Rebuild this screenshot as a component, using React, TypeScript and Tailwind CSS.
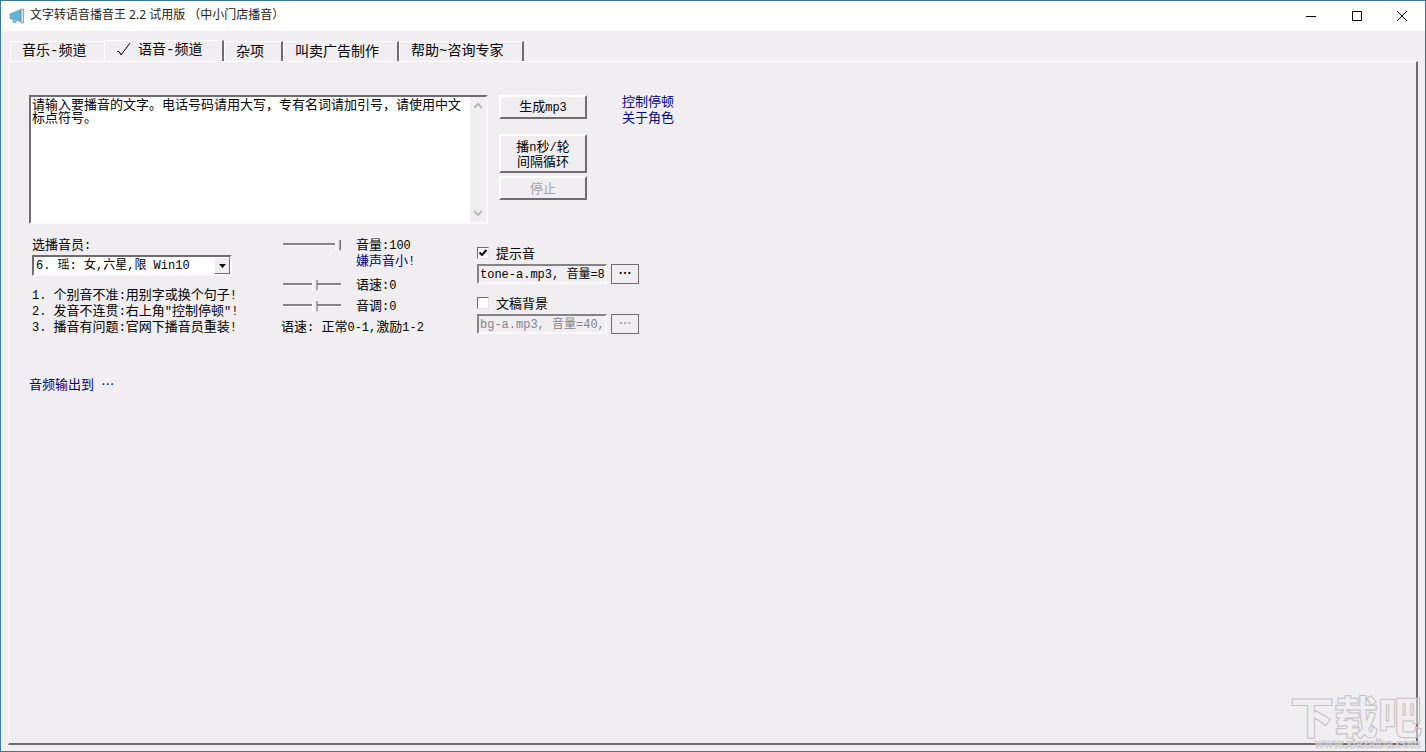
import React, { useState } from 'react';

const CJK = "font-['Noto_Sans_CJK_SC',sans-serif]";
const MONO = "font-['Liberation_Mono','Noto_Sans_CJK_SC',monospace]";

// Latin runs are set in the fixed-width face, everything else in the CJK one
const Mixed: React.FC<{ text: string }> = ({ text }) => (
  <>
    {text.split(/([\x20-\x7e]+)/).map((part, i) =>
      i % 2 === 1 ? (
        <span key={i} className={`${MONO} text-xs leading-none`}>{part}</span>
      ) : (
        part
      )
    )}
  </>
);

const TabText: React.FC<{ text: string }> = ({ text }) => (
  <>
    {text.split(/([-~])/).map((part, i) => (i % 2 === 1 ? <span key={i} className={MONO}>{part}</span> : part))}
  </>
);

interface TabProps {
  label: string;
  active: boolean;
  width: string;
  first?: boolean;
  onSelect: () => void;
}

const Tab: React.FC<TabProps> = ({ label, active, width, first, onSelect }) => (
  <button
    role="tab"
    aria-selected={active}
    onClick={onSelect}
    className={`flex items-center border-t border-l border-t-white border-l-white text-sm leading-none ${width} ${
      active ? 'h-[22px] -mb-px bg-[#f0eef1] pb-[5px] pl-3' : 'h-5 pb-[3px] pl-[11px]'
    } ${first ? '' : 'border-r-2 border-r-[#6f6c6f]'}`}
  >
    {active && (
      <svg width="14" height="14" viewBox="0 0 14 14" className="mr-[7px]" fill="none" stroke="black">
        <path d="M0 9.500h2l2 3.500L13 1" />
      </svg>
    )}
    <span className="whitespace-pre"><TabText text={label} /></span>
  </button>
);

interface PushButtonProps {
  children: React.ReactNode;
  className: string;
  disabled?: boolean;
}

const PushButton: React.FC<PushButtonProps> = ({ children, className, disabled }) => (
  <button
    disabled={disabled}
    className={`w-[88px] border-2 border-t-white border-l-white border-r-[#6f6c6f] border-b-[#6f6c6f] bg-[#f0eef1] pb-[2px] text-[13px] leading-[13px] disabled:text-[#a5a3a6] ${className}`}
  >
    {children}
  </button>
);

const Slider: React.FC<{ id: string; initial: number }> = ({ id, initial }) => {
  const [value, setValue] = useState(initial);
  return (
    <input
      id={id}
      type="range"
      min={0}
      max={100}
      value={value}
      onChange={(e) => setValue(Number(e.target.value))}
      className="block h-4 w-[58px] appearance-none bg-transparent [&::-webkit-slider-runnable-track]:h-[3px] [&::-webkit-slider-runnable-track]:border-t-2 [&::-webkit-slider-runnable-track]:border-b [&::-webkit-slider-runnable-track]:border-t-[#868386] [&::-webkit-slider-runnable-track]:border-b-white [&::-webkit-slider-thumb]:-mt-[5px] [&::-webkit-slider-thumb]:h-[13px] [&::-webkit-slider-thumb]:w-[6px] [&::-webkit-slider-thumb]:appearance-none [&::-webkit-slider-thumb]:bg-[linear-gradient(to_right,#fff_1px,#eeecef_2px,#eeecef_4px,#6f6c6f_5px)] [&::-webkit-slider-thumb]:[clip-path:polygon(0_0,100%_0,100%_75%,50%_100%,0_75%)]"
    />
  );
};

interface SoundFileProps {
  id: string;
  label: string;
  value: string;
  defaultChecked: boolean;
}

const SoundFile: React.FC<SoundFileProps> = ({ id, label, value, defaultChecked }) => {
  const [on, setOn] = useState(defaultChecked);
  return (
    <div>
      <label htmlFor={id} className="flex h-4 items-center gap-[7px]">
        <span className="relative flex">
          <input
            id={id}
            type="checkbox"
            checked={on}
            onChange={() => setOn(!on)}
            className="h-3 w-3 appearance-none border border-t-[#6f6c6f] border-l-[#6f6c6f] border-r-[#e3e1e4] border-b-[#e3e1e4] bg-white"
          />
          {on && (
            <svg width="12" height="12" viewBox="0 0 12 12" className="pointer-events-none absolute inset-0" fill="none" stroke="black" strokeWidth="2">
              <path d="M2.5 5.5 5 8l4.500-5" />
            </svg>
          )}
        </span>
        {label}
      </label>
      <div className="mt-[3px] flex gap-1">
        <input
          type="text"
          readOnly
          aria-label={`${label}文件`}
          value={value}
          disabled={!on}
          className={`${MONO} h-5 w-[130px] border-2 border-t-[#868386] border-l-[#868386] border-r-[#f8f7f9] border-b-[#f8f7f9] bg-[#f0eef1] pb-[2px] pl-px text-xs leading-4 disabled:text-[#868386]`}
        />
        <button
          disabled={!on}
          aria-label={`选择${label}`}
          className="flex h-5 w-7 items-center justify-center border border-[#6f6c6f] pb-1 text-[13px] font-bold leading-none disabled:text-[#a5a3a6]"
        >
          …
        </button>
      </div>
    </div>
  );
};

const TABS = [
  { label: '音乐-频道', width: 'w-[94px]' },
  { label: '语音-频道', width: 'w-[120px]' },
  { label: '杂项', width: 'w-[59px]' },
  { label: '叫卖广告制作', width: 'w-[116px]' },
  { label: '帮助~咨询专家', width: 'w-[125px]' },
];

const TitleBar: React.FC = () => (
  <header className="flex h-[30px] items-center bg-white pl-2">
    <svg width="16" height="16" viewBox="0 0 16 16" className="mr-[5px]">
      <path d="M1 6 12 1.500v12L1 10.500z" fill="#5fb4dd" stroke="#6f93a8" strokeWidth=".8" />
      <path d="M12 1h2.500v14H12z" fill="#dde2e5" stroke="#7b868c" strokeWidth=".7" />
      <path d="M4 11v3l3 .8v-3" fill="#8ccae6" stroke="#6f93a8" strokeWidth=".8" />
    </svg>
    <h1 className="grow pb-[2px] font-['Noto_Sans','Noto_Sans_CJK_SC',sans-serif] text-xs leading-4 text-[#222]">
      文字转语音播音王 2.2 试用版 （中小门店播音）
    </h1>
    <button aria-label="最小化" className="flex h-full w-[46px] items-center justify-center">
      <svg width="10" height="10" viewBox="0 0 10 10" stroke="black"><path d="M0 5.500h10" /></svg>
    </button>
    <button aria-label="最大化" className="flex h-full w-[45px] items-center justify-center">
      <svg width="10" height="10" viewBox="0 0 10 10" fill="none" stroke="black"><path d="M.5.5h9v9h-9z" /></svg>
    </button>
    <button aria-label="关闭" className="flex h-full w-[46px] items-center justify-center">
      <svg width="10" height="10" viewBox="0 0 10 10" stroke="black"><path d="m0 0 10 10M10 0 0 10" /></svg>
    </button>
  </header>
);

const App: React.FC = () => {
  const [tab, setTab] = useState(1);
  const link = 'block text-[#00008b]';

  return (
    <div className={`${CJK} relative flex min-h-screen flex-col overflow-hidden border border-[#3d7896] bg-[#f0eef1] text-[13px] leading-4 text-black`}>
      <TitleBar />

      <div className="flex grow flex-col px-[7px] pb-[6px] pt-2">
        <div role="tablist" className="flex h-[22px] items-end pl-[2px]">
          {TABS.map((t, i) => (
            <Tab key={t.label} label={t.label} width={t.width} first={i === 0} active={tab === i} onSelect={() => setTab(i)} />
          ))}
        </div>

        <main className="grow border-t border-r-2 border-b-2 border-l border-t-white border-l-white border-r-[#6f6c6f] border-b-[#6f6c6f] pl-5 pt-[33px]">
          <div className="flex items-start">
            <div className="flex h-[129px] w-[459px] border-2 border-t-[#6f6c6f] border-l-[#6f6c6f] border-r-[#faf9fb] border-b-[#faf9fb] bg-white">
              <textarea
                aria-label="播音文字"
                className="grow resize-none overflow-hidden pl-px text-[13px] leading-[13px] outline-none"
                defaultValue="请输入要播音的文字。电话号码请用大写，专有名词请加引号，请使用中文标点符号。"
              />
              <div className="flex w-4 flex-col items-center justify-between bg-[#f0eef1] py-1">
                <button aria-label="向上滚动">
                  <svg width="8" height="9" viewBox="0 0 8 9" fill="none" stroke="#b9b7ba" strokeWidth="2"><path d="m0 7 4-4 4 4" /></svg>
                </button>
                <button aria-label="向下滚动">
                  <svg width="8" height="9" viewBox="0 0 8 9" fill="none" stroke="#b9b7ba" strokeWidth="2"><path d="m0 2 4 4 4-4" /></svg>
                </button>
              </div>
            </div>

            <div className="ml-[11px] flex flex-col">
              <PushButton className="h-6"><Mixed text="生成mp3" /></PushButton>
              <PushButton className="mt-[15px] h-[39px]">
                <span className="block"><Mixed text="播n秒/轮" /></span>
                <span className="block">间隔循环</span>
              </PushButton>
              <PushButton className="mt-[3px] h-6" disabled>停止</PushButton>
            </div>

            <nav className="-mt-[2px] ml-[35px]">
              <a href="#pause" className={link}>控制停顿</a>
              <a href="#roles" className={link}>关于角色</a>
            </nav>
          </div>

          <div className="mt-3 flex items-start">
            <div className="w-[252px] pl-[3px]">
              <label htmlFor="speaker" className="block"><Mixed text="选播音员:" /></label>
              <div className="relative mt-[3px] h-[21px] w-[200px]">
                <select
                  id="speaker"
                  className={`${MONO} h-full w-full appearance-none border-2 border-t-[#6f6c6f] border-l-[#6f6c6f] border-r-[#faf9fb] border-b-[#faf9fb] bg-white pl-[2px] text-xs leading-4`}
                >
                  <option>6. 瑶: 女,六星,限 Win10</option>
                </select>
                <span className="pointer-events-none absolute inset-y-[2px] right-[2px] flex w-4 items-center justify-center border border-t-white border-l-white border-r-[#6f6c6f] border-b-[#6f6c6f] bg-[#f0eef1]">
                  <svg width="7" height="4" viewBox="0 0 7 4"><path d="M0 0h7L3.500 4z" /></svg>
                </span>
              </div>
              <ul className="mt-[10px] whitespace-pre">
                <li><Mixed text="1. 个别音不准:用别字或换个句子!" /></li>
                <li><Mixed text={'2. 发音不连贯:右上角"控制停顿"!'} /></li>
                <li><Mixed text="3. 播音有问题:官网下播音员重装!" /></li>
              </ul>
            </div>

            <div className="w-[196px]">
              <div className="flex gap-[15px] pl-[2px]">
                <Slider id="volume" initial={100} />
                <div>
                  <label htmlFor="volume" className="block"><Mixed text="音量:100" /></label>
                  <a href="#louder" className={link}><Mixed text="嫌声音小!" /></a>
                </div>
              </div>
              <div className="mt-2 flex gap-[15px] pl-[2px]">
                <Slider id="speed" initial={55} />
                <label htmlFor="speed"><Mixed text="语速:0" /></label>
              </div>
              <div className="mt-[5px] flex gap-[15px] pl-[2px]">
                <Slider id="pitch" initial={55} />
                <label htmlFor="pitch"><Mixed text="音调:0" /></label>
              </div>
              <p className="mt-[5px] whitespace-pre"><Mixed text="语速: 正常0-1,激励1-2" /></p>
            </div>

            <div className="flex flex-col gap-[11px] pt-[9px]">
              <SoundFile id="tone" label="提示音" value="tone-a.mp3, 音量=8" defaultChecked />
              <SoundFile id="background" label="文稿背景" value="bg-a.mp3, 音量=40," defaultChecked={false} />
            </div>
          </div>

          <a href="#output" className={`${link} mt-[42px] w-fit`}><Mixed text="音频输出到 …" /></a>
        </main>
      </div>

      <svg width="136" height="60" viewBox="0 0 136 60" className="pointer-events-none absolute right-0 bottom-0" fill="#f0eef1" fillOpacity=".5" stroke="#c4c2c5">
        <text x="1" y="43" fontSize="44" fontWeight="900" className={CJK}>下载吧</text>
        <text x="26" y="57" fontSize="12" fontWeight="700" strokeWidth=".7" className="font-['Liberation_Sans',sans-serif]">www.xiazaiba.com</text>
      </svg>
    </div>
  );
};

export default App;
